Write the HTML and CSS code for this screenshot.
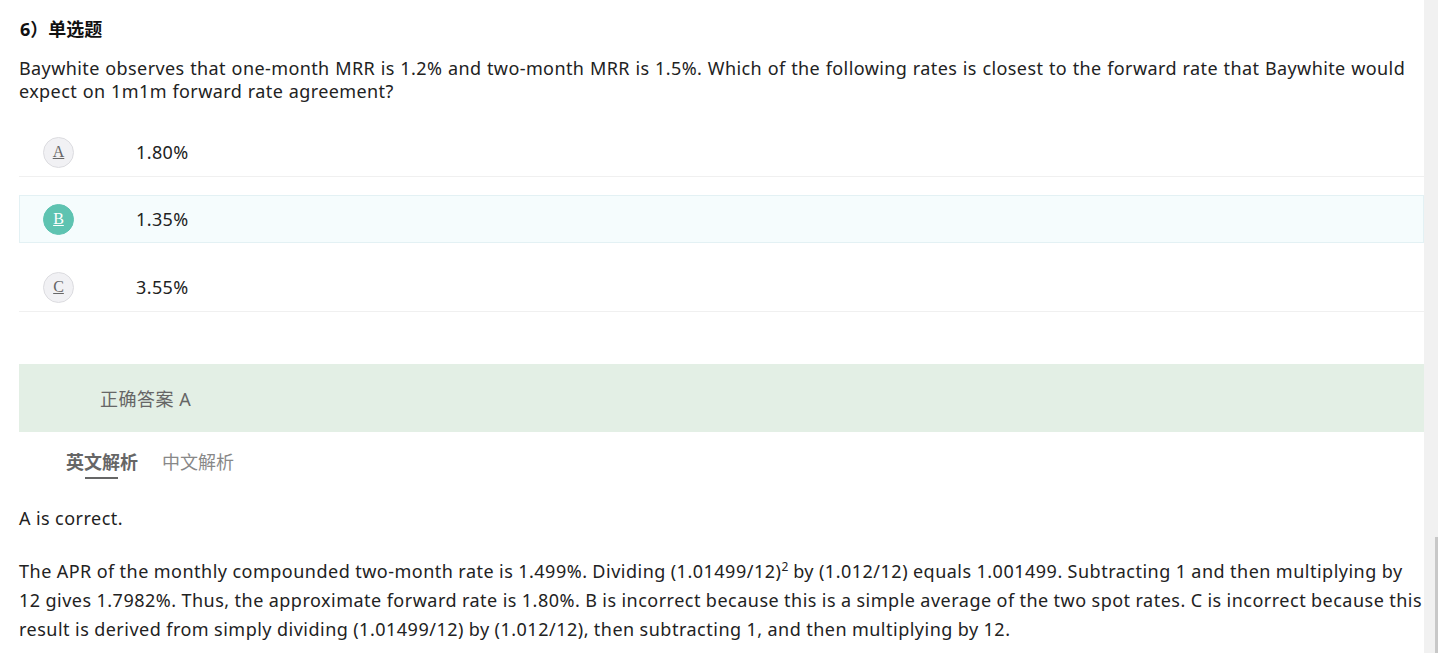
FILE: index.html
```html
<!DOCTYPE html>
<html lang="zh-CN">
<head>
    <meta charset="UTF-8">
    <title>单选题</title>
    <link rel="stylesheet" href="styles.css">
</head>
<body>

<div class="page">
    <div class="question">
        <h3 class="q-type">6）单选题</h3>
        <p class="q-stem">Baywhite observes that one-month MRR is 1.2% and two-month MRR is 1.5%. Which of the following rates is closest to the forward rate that Baywhite would expect on 1m1m forward rate agreement?</p>

        <div class="options">
            <div class="option">
                <span class="opt-letter">A</span>
                <span class="opt-text">1.80%</span>
            </div>
            <div class="option selected">
                <span class="opt-letter">B</span>
                <span class="opt-text">1.35%</span>
            </div>
            <div class="option">
                <span class="opt-letter">C</span>
                <span class="opt-text">3.55%</span>
            </div>
        </div>

        <div class="answer">正确答案 A</div>

        <div class="tabs">
            <span class="tab active">英文解析</span>
            <span class="tab">中文解析</span>
        </div>

        <div class="analysis">
            <p>A is correct.</p>
            <p>The APR of the monthly compounded two-month rate is 1.499%. Dividing (1.01499/12)<sup>2</sup> by (1.012/12) equals 1.001499. Subtracting 1 and then multiplying by 12 gives 1.7982%. Thus, the approximate forward rate is 1.80%. B is incorrect because this is a simple average of the two spot rates. C is incorrect because this result is derived from simply dividing (1.01499/12) by (1.012/12), then subtracting 1, and then multiplying by 12.</p>
        </div>
    </div>
</div>

<!-- fake scrollbar, page is scrolled to the bottom -->
<div class="scrollbar">
    <div class="thumb"></div>
</div>

</body>
</html>
```

FILE: styles.css
```css
html, body {
    height: 100%;
}
body {
    margin: 0;
    display: flex;
    overflow: hidden;
    font-family: "Noto Sans", "Noto Sans CJK SC", sans-serif;
    color: #222;
    background: #fff;
}
.page {
    flex: 1;
    padding: 0 0 0 19px;
}
.q-type {
    margin: 0;
    padding: 17px 0 0 1px;
    font-size: 18px;
    line-height: 24px;
    font-weight: bold;
    color: #111;
}
.q-stem {
    margin: 16px 0 0 0;
    font-size: 18px;
    line-height: 23px;
    letter-spacing: 0.4px;
    word-spacing: 0.5px;
}
.options {
    margin-top: 25px;
}
.option {
    display: flex;
    align-items: center;
    height: 48px;
    margin-bottom: 18px;
    border-bottom: 1px solid #f0f0f0;
    font-size: 18px;
    letter-spacing: 0.4px;
}
.option.selected {
    height: 46px;
    margin-bottom: 20px;
    border: 1px solid #e3f1f4;
    background: #f5fcfd;
}
.opt-letter {
    width: 29px;
    height: 29px;
    margin-left: 24px;
    border: 1px solid #dcdce0;
    border-radius: 50%;
    background: #f1f1f4;
    color: #666;
    font-family: "Liberation Serif", serif;
    font-size: 16px;
    letter-spacing: 0;
    text-decoration: underline;
    display: flex;
    align-items: center;
    justify-content: center;
}
.selected .opt-letter {
    margin-left: 23px;
    background: #5ec3b1;
    border-color: #5ec3b1;
    color: #fff;
}
.opt-text {
    margin-left: 62px;
}
.answer {
    margin-top: 52px;
    height: 68px;
    padding-left: 81px;
    background: #e3efe5;
    color: #666;
    font-size: 18px;
    letter-spacing: 0.5px;
    display: flex;
    align-items: center;
}
.tabs {
    display: flex;
    gap: 24px;
    padding: 17px 0 0 47px;
}
.tab {
    font-size: 18px;
    line-height: 26px;
    color: #888;
    padding-bottom: 4px;
    position: relative;
}
.tab.active {
    font-weight: bold;
    color: #666;
}
.tab.active::after {
    content: "";
    position: absolute;
    left: 19px;
    right: 20px;
    bottom: 0;
    height: 2px;
    background: #666;
}
.analysis p {
    margin: 25px 0 0 0;
    font-size: 18px;
    line-height: 29px;
    letter-spacing: 0.5px;
    word-spacing: -0.3px;
}
.analysis p + p {
    margin-top: 24px;
}
.analysis sup {
    font-size: 12px;
    line-height: 0;
    letter-spacing: 0;
}
.scrollbar {
    width: 14px;
    flex-shrink: 0;
    background: #f1f1f1;
    display: flex;
    flex-direction: column;
    justify-content: flex-end;
}
.thumb {
    height: 116px;
    margin-left: 11px;
    background: #c8c8c8;
}
```
